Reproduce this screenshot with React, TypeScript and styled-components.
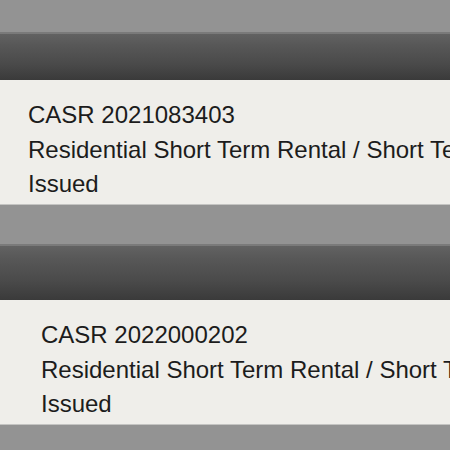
import React from 'react';
import styled, { createGlobalStyle } from 'styled-components';

const GlobalStyle = createGlobalStyle`
  html, body {
    margin: 0;
    padding: 0;
    background: #939393;
    overflow: hidden;
  }
`;

const Screen = styled.div`
  width: 450px;
  height: 450px;
  background: #939393;
  display: flex;
  flex-direction: column;
  font-family: "Liberation Sans", Arial, Helvetica, sans-serif;
`;

const Gap = styled.div<{ $size: number }>`
  height: ${p => p.$size}px;
  flex-shrink: 0;
`;

const SectionBar = styled.div<{ $height: number }>`
  height: ${p => p.$height}px;
  flex-shrink: 0;
  border-top: 2px solid #7a7a7a;
  box-sizing: border-box;
  background: linear-gradient(to bottom, #626262 0%, #575757 25%, #4a4a4a 65%, #3a3a3a 100%);
`;

const Card = styled.div<{ $indent: number }>`
  flex-shrink: 0;
  height: 125px;
  box-sizing: border-box;
  padding: 18px 0 3px ${p => p.$indent}px;
  background: #efeeea;
  border-bottom: 1px solid #c4c4c2;
  color: #1c1c1c;
  font-size: 24px;
  line-height: 34.5px;
  white-space: nowrap;
  overflow: hidden;
`;

const Line = styled.div``;

interface Permit {
  number: string;
  kind: string;
  status: string;
}

const permits: Permit[] = [
  { number: 'CASR 2021083403', kind: 'Residential Short Term Rental / Short Term Rental', status: 'Issued' },
  { number: 'CASR 2022000202', kind: 'Residential Short Term Rental / Short Term Rental', status: 'Issued' },
];

export default function App() {
  return (
    <Screen>
      <GlobalStyle />
      <Gap $size={32} />
      <SectionBar $height={48} />
      <Card $indent={28}>
        <Line>{permits[0].number}</Line>
        <Line>{permits[0].kind}</Line>
        <Line>{permits[0].status}</Line>
      </Card>
      <Gap $size={39} />
      <SectionBar $height={56} />
      <Card $indent={41}>
        <Line>{permits[1].number}</Line>
        <Line>{permits[1].kind}</Line>
        <Line>{permits[1].status}</Line>
      </Card>
    </Screen>
  );
}
